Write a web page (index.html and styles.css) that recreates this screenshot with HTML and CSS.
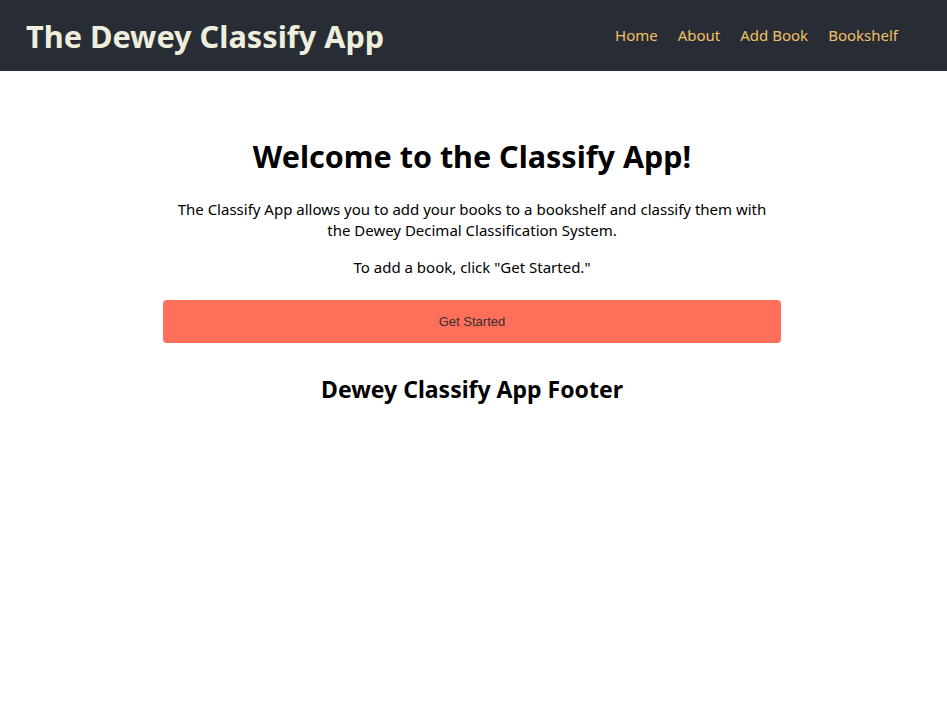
FILE: index.html
```html
<!DOCTYPE html>
<html lang="en">
<head>
<meta charset="utf-8">
<title>The Dewey Classify App</title>
<link rel="stylesheet" href="styles.css">
</head>
<body>
<header class="topbar">
  <h1 class="brand">The Dewey Classify App</h1>
  <nav class="nav">
    <a href="#">Home</a>
    <a href="#">About</a>
    <a href="#">Add Book</a>
    <a href="#">Bookshelf</a>
  </nav>
</header>
<div class="page">
  <main class="content">
    <h1 class="title">Welcome to the Classify App!</h1>
    <p class="lead">The Classify App allows you to add your books to a bookshelf and classify them with the Dewey Decimal Classification System.</p>
    <p class="lead">To add a book, click "Get Started."</p>
    <button class="cta">Get Started</button>
    <h2 class="footer-title">Dewey Classify App Footer</h2>
  </main>
</div>
</body>
</html>
```
FILE: styles.css
```css
* { box-sizing: border-box; }
body {
  margin: 0;
  font-family: "Noto Sans", "Open Sans", sans-serif;
  color: #000;
  background: #fff;
}
.topbar {
  height: 71px;
  background: #282c34;
  display: flex;
  align-items: center;
  justify-content: space-between;
  padding: 0 48px 0 26px;
}
.brand {
  margin: 0;
  font-size: 30.7px;
  font-weight: 700;
  color: #eeeedc;
}
.nav {
  display: flex;
  gap: 20px;
  padding-right: 1px;
  margin-top: -2px;
}
.nav a {
  color: #f2c166;
  text-decoration: none;
  font-size: 15px;
}
.page {
  padding-right: 3px;
}
.content {
  width: 618px;
  margin: 0 auto;
  padding-top: 64px;
  text-align: center;
}
.title {
  margin: 0 0 22px;
  font-size: 30.5px;
  font-weight: 700;
  line-height: 42px;
}
.lead {
  margin: 0 0 16px;
  padding: 0 10px;
  font-size: 15px;
  line-height: 21px;
}
.cta {
  display: block;
  width: 100%;
  height: 43px;
  margin-top: 22px;
  border: none;
  border-radius: 4px;
  background: #ff6f5a;
  color: #333;
  font-family: "Liberation Sans", Arial, sans-serif;
  font-size: 13px;
}
.footer-title {
  margin: 30px 0 0;
  font-size: 23px;
  font-weight: 700;
  line-height: 32px;
}
```
